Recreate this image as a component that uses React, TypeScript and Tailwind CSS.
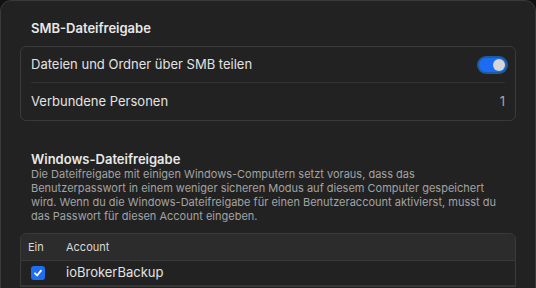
import React from 'react';

const Toggle: React.FC = () => (
  <div className="-mr-[3px] rounded-full bg-[#1d5b9c] p-[2px]">
    <div className="flex h-[14px] w-[27px] items-center justify-end rounded-full bg-[#1b6cf2] pr-[1px]">
      <div className="h-[12px] w-[12px] rounded-full bg-[#d6d6d6]" />
    </div>
  </div>
);

const Checkbox: React.FC = () => (
  <div className="flex h-[14px] w-[14px] items-center justify-center rounded-[3px] bg-[#1d6ef0]">
    <svg width="10" height="10" viewBox="0 0 10 10" fill="none">
      <path d="M2 5.3l2.1 2.2L8 2.6" stroke="white" strokeWidth="1.8" strokeLinecap="round" strokeLinejoin="round" />
    </svg>
  </div>
);

const App: React.FC = () => {
  return (
    <div className="h-[288px] w-[536px] overflow-hidden bg-[#111]" style={{ fontFamily: 'Inter, "Noto Sans", sans-serif' }}>
      <div className="h-[300px] rounded-t-[11px] border border-[#3a3a3a] bg-[#222222] px-[19px] pt-[19px] text-[#e2e2e2]">
        <h2 className="pl-[11px] text-[13px] font-semibold leading-[16px] text-[#e8e8e8]">SMB-Dateifreigabe</h2>

        <div className="mt-[10px] rounded-[6px] border border-[#3a3a3a] px-[10px]">
          <div className="flex h-[36px] items-center justify-between border-b border-[#333] text-[13px]">
            <span>Dateien und Ordner über SMB teilen</span>
            <Toggle />
          </div>
          <div className="flex h-[37px] items-center justify-between text-[13px]">
            <span>Verbundene Personen</span>
            <span className="text-[#a9a9a9]">1</span>
          </div>
        </div>

        <h2 className="mt-[30px] pl-[11px] text-[13px] font-semibold leading-[16px] text-[#e8e8e8]">Windows-Dateifreigabe</h2>
        <p className="whitespace-nowrap pl-[11px] text-[11px] leading-[14px] text-[#a3a3a3]">
          Die Dateifreigabe mit einigen Windows-Computern setzt voraus, dass das
          <br />
          Benutzerpasswort in einem weniger sicheren Modus auf diesem Computer gespeichert
          <br />
          wird. Wenn du die Windows-Dateifreigabe für einen Benutzeraccount aktivierst, musst du
          <br />
          das Passwort für diesen Account eingeben.
        </p>

        <div className="mt-[10px] overflow-hidden rounded-t-[6px] border border-[#3a3a3a]">
          <div className="flex h-[27px] items-center border-b border-[#3a3a3a] bg-[#2c2c2c] text-[11px] text-[#d8d8d8]">
            <span className="w-[45px] pl-[7px]">Ein</span>
            <span>Account</span>
          </div>
          <div className="flex h-[25px] items-center border-b border-[#333] text-[13px]">
            <div className="w-[45px] pl-[10px]">
              <Checkbox />
            </div>
            <span>ioBrokerBackup</span>
          </div>
        </div>
      </div>
    </div>
  );
};

export default App;
